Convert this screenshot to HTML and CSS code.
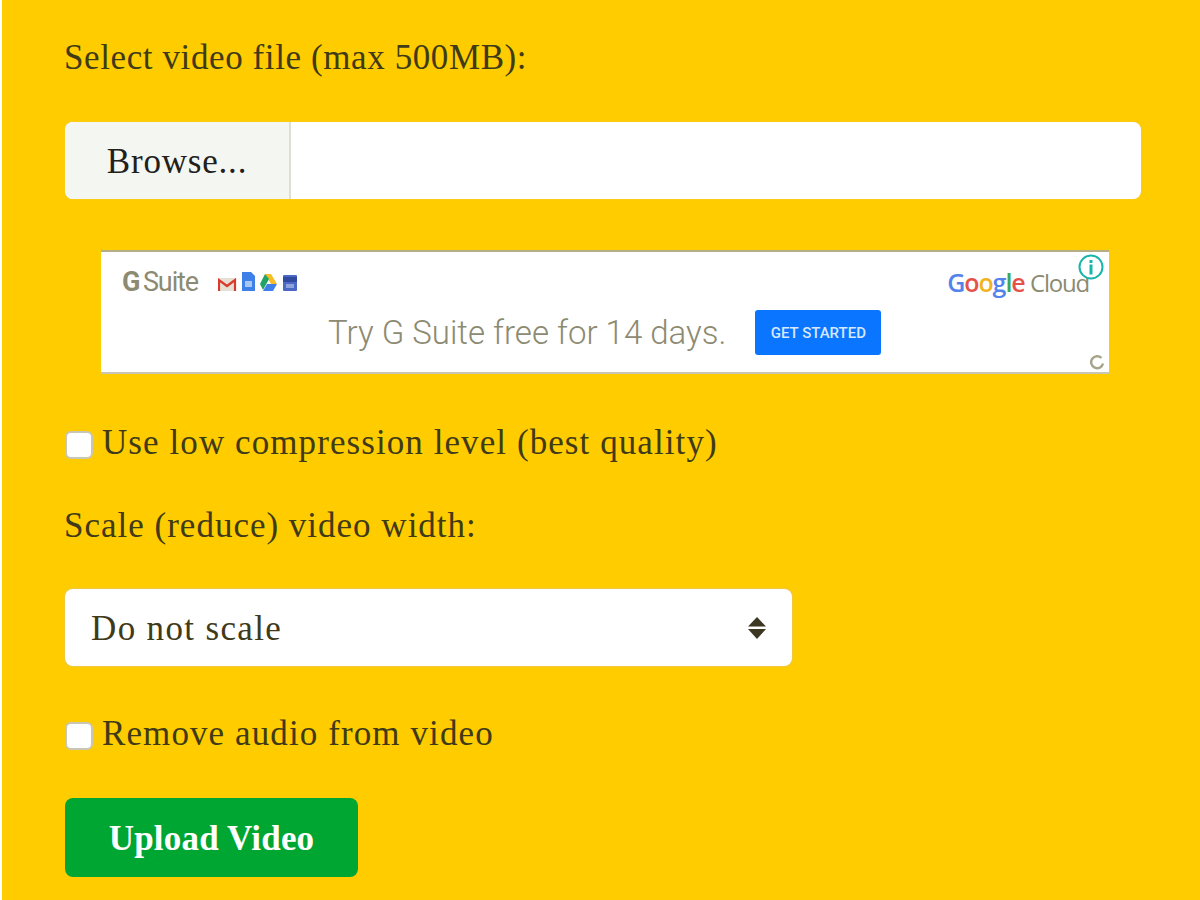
FILE: index.html
```html
<!DOCTYPE html>
<html lang="en">
<head>
<meta charset="UTF-8">
<title>Compress Video</title>
<link rel="stylesheet" href="styles.css">
</head>
<body>
<div class="panel">
  <label class="field-label label-file">Select video file (max 500MB):</label>
  <div class="file-input">
    <div class="browse">Browse...</div>
  </div>

  <div class="ad">
    <div class="ad-top">
      <div class="gsuite">
        <span class="gsuite-name"><b>G</b> Suite</span>
        <!-- little product icons -->
        <svg class="app-icons" width="80" height="19" viewBox="0 0 80 19">
          <rect x="0" y="6" width="18" height="13" fill="#e6e0d4"/>
          <path d="M1 19V8l8 6 8-6v11" fill="none" stroke="#d93a2b" stroke-width="2.200"/>
          <path d="M24 0h9l4 4v15H24z" fill="#3f7fe8"/>
          <rect x="27" y="9" width="7" height="6" fill="#a8c6f5"/>
          <path d="M47 2h6l6 10h-6z" fill="#f6bf26"/>
          <path d="M47 2l-5 10 3 6 6-11z" fill="#1fa463"/>
          <path d="M45 19h10l4-7H49z" fill="#3f7fe8"/>
          <rect x="65" y="3" width="14" height="16" rx="1" fill="#4a68c4"/>
          <rect x="65" y="5" width="14" height="5" fill="#2f4a9e"/>
          <rect x="68" y="12" width="8" height="4" fill="#8ea3de"/>
        </svg>
      </div>
      <div class="google-cloud"><span class="g-blue">G</span><span class="g-red">o</span><span class="g-yellow">o</span><span class="g-blue">g</span><span class="g-green">l</span><span class="g-red">e</span> <span class="cloud">Cloud</span></div>
    </div>
    <div class="ad-bottom">
      <span class="ad-text">Try G Suite free for 14 days.</span>
      <span class="ad-button">GET STARTED</span>
    </div>
    <svg class="ad-info" width="28" height="28" viewBox="0 0 28 28">
      <circle cx="14" cy="14" r="11.500" fill="#fff" stroke="#17b5ac" stroke-width="2"/>
      <rect x="12.500" y="7" width="3" height="3" fill="#17b5ac"/>
      <rect x="12.500" y="11.500" width="3" height="10" fill="#17b5ac"/>
    </svg>
    <svg class="ad-reload" width="16" height="16" viewBox="0 0 16 16">
      <path d="M12.500 4A6 6 0 1 0 14 9.500" fill="none" stroke="#a8a48c" stroke-width="2.500"/>
    </svg>
  </div>

  <label class="check-row row-quality"><span class="check"></span>Use low compression level (best quality)</label>

  <label class="field-label label-scale">Scale (reduce) video width:</label>
  <div class="select">
    <span>Do not scale</span>
    <svg width="18" height="22" viewBox="0 0 18 22">
      <path d="M9 0l9 9.500H0z" fill="#3b3722"/>
      <path d="M9 22l9-10H0z" fill="#3b3722"/>
    </svg>
  </div>

  <label class="check-row row-audio"><span class="check"></span>Remove audio from video</label>

  <button class="upload">Upload Video</button>
</div>
</body>
</html>
```

FILE: styles.css
```css
html, body {
  margin: 0;
  padding: 0;
  background-color: #fff;
}
body {
  font-family: "Liberation Serif", serif;
  color: #403a18;
}
.panel {
  margin-left: 2px;
  height: 900px;
  box-sizing: border-box;
  padding: 38px 59px 0 62px;
  background-color: #ffcc00;
  overflow: hidden;
}
.field-label {
  display: block;
  font-size: 35px;
  line-height: 40px;
}
.label-file {
  letter-spacing: 0.6px;
}
.file-input {
  margin: 44px 0 0 1px;
  height: 77px;
  background-color: #fff;
  border-radius: 8px;
  overflow: hidden;
  box-shadow: 0 0 1px #c9c9d0;
}
.browse {
  width: 226px;
  height: 100%;
  box-sizing: border-box;
  padding-top: 2px;
  display: flex;
  align-items: center;
  justify-content: center;
  background-color: #f3f6f1;
  border-right: 2px solid #dedfce;
  color: #22201a;
  font-size: 35px;
  letter-spacing: 0.8px;
}

/* ad banner */
.ad {
  position: relative;
  margin: 51px 32px 0 37px;
  height: 124px;
  box-sizing: border-box;
  padding: 15px 20px 0 21px;
  background-color: #fff;
  border-top: 2px solid #b5ad85;
  border-bottom: 2px solid #c9c6b5;
  font-family: Roboto, sans-serif;
}
.ad-top {
  display: flex;
  justify-content: space-between;
  align-items: center;
  height: 30px;
}
.gsuite {
  display: flex;
  align-items: center;
  gap: 20px;
}
.gsuite-name {
  font-size: 27px;
  letter-spacing: -1.1px;
  color: #8d8a72;
}
.gsuite-name b {
  margin-right: -2px;
}
.app-icons {
  margin-bottom: 1px;
}
.google-cloud {
  font-family: "Open Sans", sans-serif;
  font-size: 25px;
  font-weight: 600;
  letter-spacing: -1.1px;
}
.g-blue { color: #5383ec; }
.g-red { color: #e4534a; }
.g-yellow { color: #f0b41e; }
.g-green { color: #3fa757; }
.cloud {
  color: #8d8a72;
  font-size: 24px;
  font-weight: 400;
  letter-spacing: -1.2px;
}
.ad-bottom {
  margin-top: 13px;
  display: flex;
  align-items: center;
  gap: 29px;
  padding-left: 206px;
}
.ad-text {
  font-size: 33px;
  font-weight: 300;
  color: #8d8a72;
}
.ad-button {
  width: 126px;
  height: 45px;
  display: flex;
  align-items: center;
  justify-content: center;
  background-color: #0a75ff;
  border-radius: 3px;
  color: #d6e8ff;
  font-size: 15px;
  font-weight: 500;
}
.ad-info {
  position: absolute;
  top: 1px;
  right: 4px;
}
.ad-reload {
  position: absolute;
  right: 4px;
  bottom: 2px;
}

.check-row {
  display: flex;
  align-items: center;
  gap: 9px;
  font-size: 35px;
  line-height: 40px;
}
.check {
  width: 28px;
  height: 28px;
  box-sizing: border-box;
  margin-top: 4px;
  margin-left: 1px;
  background-color: #fff;
  border: 2px solid #c9c6b5;
  border-radius: 6px;
}
.row-quality {
  margin-top: 49px;
  letter-spacing: 1.08px;
}
.label-scale {
  margin-top: 43px;
  letter-spacing: 1px;
}
.select {
  margin: 43px 0 0 1px;
  width: 727px;
  height: 77px;
  box-sizing: border-box;
  padding: 2px 26px 0 26px;
  display: flex;
  align-items: center;
  justify-content: space-between;
  background-color: #fff;
  border-radius: 8px;
  box-shadow: 0 0 2px #c0c2d8;
  font-size: 35px;
  letter-spacing: 1.35px;
}
.select svg {
  margin-top: -2px;
}
.row-audio {
  margin-top: 48px;
  letter-spacing: 1.1px;
}
.upload {
  display: block;
  margin: 44px 0 0 1px;
  width: 293px;
  height: 79px;
  padding: 2px 0 0 0;
  border: none;
  border-radius: 8px;
  background-color: #00a632;
  color: #fff;
  font-family: inherit;
  font-size: 35px;
  font-weight: 700;
  letter-spacing: 0.2px;
}
```
